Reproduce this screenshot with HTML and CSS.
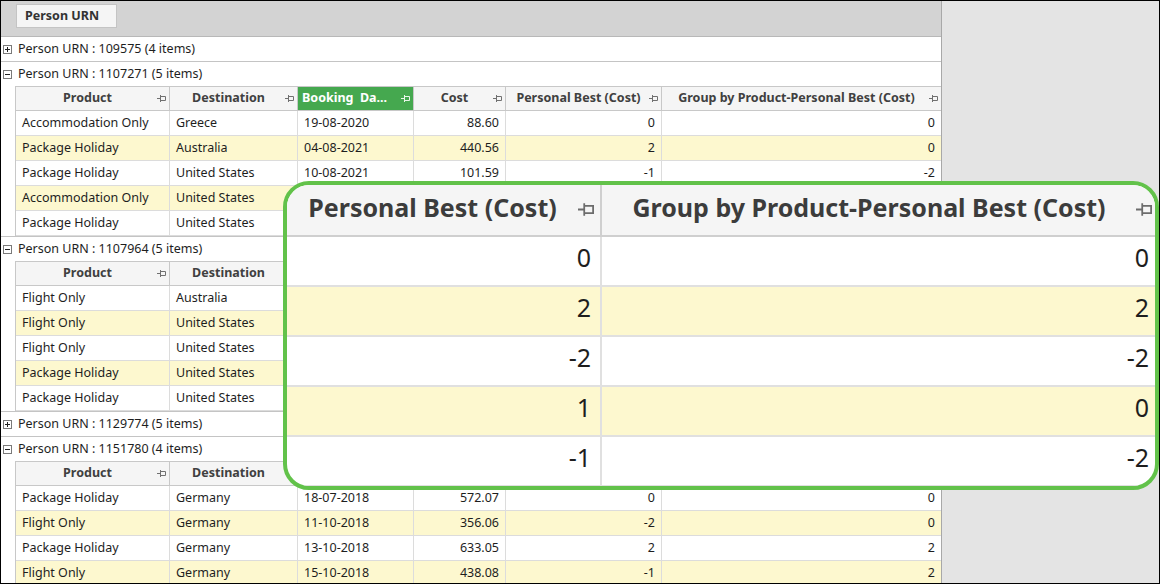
FILE: index.html
```html
<!DOCTYPE html>
<html lang="en">
<head>
  <meta charset="UTF-8">
  <meta name="viewport" content="width=device-width, initial-scale=1.0">
  <title>Personal Best (Cost)</title>
  <link rel="stylesheet" href="styles.css">
</head>
<body>
  <div class="frame">
    <div class="grid">
      <div class="group-panel">
        <span class="group-chip">Person URN</span>
      </div>

      <!-- grupo 109575 (cerrado) -->
      <div class="group">
        <div class="group-row"><span class="expander plus"></span>Person URN : 109575 (4 items)</div>
      </div>

      <!-- grupo 1107271 -->
      <div class="group">
        <div class="group-row"><span class="expander"></span>Person URN : 1107271 (5 items)</div>
        <div class="detail">
          <div class="row head">
            <div class="hd"><span>Product</span><svg class="pin" viewBox="0 0 9 7"><path d="M0 3.5H3M3.5 0V7M3.5 1.5H8.5V5.5H3.5"/></svg></div>
            <div class="hd"><span>Destination</span><svg class="pin" viewBox="0 0 9 7"><path d="M0 3.5H3M3.5 0V7M3.5 1.5H8.5V5.5H3.5"/></svg></div>
            <div class="hd sorted"><span>Booking&nbsp; Da...</span><svg class="pin" viewBox="0 0 9 7"><path d="M0 3.5H3M3.5 0V7M3.5 1.5H8.5V5.5H3.5"/></svg></div>
            <div class="hd"><span>Cost</span><svg class="pin" viewBox="0 0 9 7"><path d="M0 3.5H3M3.5 0V7M3.5 1.5H8.5V5.5H3.5"/></svg></div>
            <div class="hd"><span>Personal Best (Cost)</span><svg class="pin" viewBox="0 0 9 7"><path d="M0 3.5H3M3.5 0V7M3.5 1.5H8.5V5.5H3.5"/></svg></div>
            <div class="hd"><span>Group by Product-Personal Best (Cost)</span><svg class="pin" viewBox="0 0 9 7"><path d="M0 3.5H3M3.5 0V7M3.5 1.5H8.5V5.5H3.5"/></svg></div>
          </div>
          <div class="row"><div>Accommodation Only</div><div>Greece</div><div>19-08-2020</div><div class="num">88.60</div><div class="num">0</div><div class="num">0</div></div>
          <div class="row alt"><div>Package Holiday</div><div>Australia</div><div>04-08-2021</div><div class="num">440.56</div><div class="num">2</div><div class="num">0</div></div>
          <div class="row"><div>Package Holiday</div><div>United States</div><div>10-08-2021</div><div class="num">101.59</div><div class="num">-1</div><div class="num">-2</div></div>
          <div class="row alt"><div>Accommodation Only</div><div>United States</div><div>12-08-2021</div><div class="num">212.40</div><div class="num">1</div><div class="num">0</div></div>
          <div class="row"><div>Package Holiday</div><div>United States</div><div>14-08-2021</div><div class="num">95.10</div><div class="num">-1</div><div class="num">-2</div></div>
        </div>
      </div>

      <!-- grupo 1107964 -->
      <div class="group">
        <div class="group-row"><span class="expander"></span>Person URN : 1107964 (5 items)</div>
        <div class="detail">
          <div class="row head">
            <div class="hd"><span>Product</span><svg class="pin" viewBox="0 0 9 7"><path d="M0 3.5H3M3.5 0V7M3.5 1.5H8.5V5.5H3.5"/></svg></div>
            <div class="hd"><span>Destination</span><svg class="pin" viewBox="0 0 9 7"><path d="M0 3.5H3M3.5 0V7M3.5 1.5H8.5V5.5H3.5"/></svg></div>
            <div class="hd"><span>Booking Date</span><svg class="pin" viewBox="0 0 9 7"><path d="M0 3.5H3M3.5 0V7M3.5 1.5H8.5V5.5H3.5"/></svg></div>
            <div class="hd"><span>Cost</span><svg class="pin" viewBox="0 0 9 7"><path d="M0 3.5H3M3.5 0V7M3.5 1.5H8.5V5.5H3.5"/></svg></div>
            <div class="hd"><span>Personal Best (Cost)</span><svg class="pin" viewBox="0 0 9 7"><path d="M0 3.5H3M3.5 0V7M3.5 1.5H8.5V5.5H3.5"/></svg></div>
            <div class="hd"><span>Group by Product-Personal Best (Cost)</span><svg class="pin" viewBox="0 0 9 7"><path d="M0 3.5H3M3.5 0V7M3.5 1.5H8.5V5.5H3.5"/></svg></div>
          </div>
          <div class="row"><div>Flight Only</div><div>Australia</div><div>02-03-2019</div><div class="num">310.20</div><div class="num">0</div><div class="num">0</div></div>
          <div class="row alt"><div>Flight Only</div><div>United States</div><div>17-05-2019</div><div class="num">285.75</div><div class="num">2</div><div class="num">2</div></div>
          <div class="row"><div>Flight Only</div><div>United States</div><div>21-09-2019</div><div class="num">199.99</div><div class="num">-2</div><div class="num">-2</div></div>
          <div class="row alt"><div>Package Holiday</div><div>United States</div><div>08-01-2020</div><div class="num">702.30</div><div class="num">1</div><div class="num">0</div></div>
          <div class="row"><div>Package Holiday</div><div>United States</div><div>30-06-2020</div><div class="num">655.40</div><div class="num">-1</div><div class="num">-2</div></div>
        </div>
      </div>

      <!-- grupo 1129774 (cerrado) -->
      <div class="group">
        <div class="group-row"><span class="expander plus"></span>Person URN : 1129774 (5 items)</div>
      </div>

      <!-- grupo 1151780 -->
      <div class="group">
        <div class="group-row"><span class="expander"></span>Person URN : 1151780 (4 items)</div>
        <div class="detail">
          <div class="row head">
            <div class="hd"><span>Product</span><svg class="pin" viewBox="0 0 9 7"><path d="M0 3.5H3M3.5 0V7M3.5 1.5H8.5V5.5H3.5"/></svg></div>
            <div class="hd"><span>Destination</span><svg class="pin" viewBox="0 0 9 7"><path d="M0 3.5H3M3.5 0V7M3.5 1.5H8.5V5.5H3.5"/></svg></div>
            <div class="hd"><span>Booking Date</span><svg class="pin" viewBox="0 0 9 7"><path d="M0 3.5H3M3.5 0V7M3.5 1.5H8.5V5.5H3.5"/></svg></div>
            <div class="hd"><span>Cost</span><svg class="pin" viewBox="0 0 9 7"><path d="M0 3.5H3M3.5 0V7M3.5 1.5H8.5V5.5H3.5"/></svg></div>
            <div class="hd"><span>Personal Best (Cost)</span><svg class="pin" viewBox="0 0 9 7"><path d="M0 3.5H3M3.5 0V7M3.5 1.5H8.5V5.5H3.5"/></svg></div>
            <div class="hd"><span>Group by Product-Personal Best (Cost)</span><svg class="pin" viewBox="0 0 9 7"><path d="M0 3.5H3M3.5 0V7M3.5 1.5H8.5V5.5H3.5"/></svg></div>
          </div>
          <div class="row"><div>Package Holiday</div><div>Germany</div><div>18-07-2018</div><div class="num">572.07</div><div class="num">0</div><div class="num">0</div></div>
          <div class="row alt"><div>Flight Only</div><div>Germany</div><div>11-10-2018</div><div class="num">356.06</div><div class="num">-2</div><div class="num">0</div></div>
          <div class="row"><div>Package Holiday</div><div>Germany</div><div>13-10-2018</div><div class="num">633.05</div><div class="num">2</div><div class="num">2</div></div>
          <div class="row alt"><div>Flight Only</div><div>Germany</div><div>15-10-2018</div><div class="num">438.08</div><div class="num">-1</div><div class="num">2</div></div>
        </div>
      </div>
    </div>

    <div class="side"></div>

    <!-- Ampliación de las dos columnas calculadas -->
    <div class="callout">
      <div class="zrow zhead">
        <div class="zhd"><span>Personal Best (Cost)</span><svg class="zpin" viewBox="0 0 9 7"><path d="M0 3.5H3M3.5 0V7M3.5 1.5H8.5V5.5H3.5"/></svg></div>
        <div class="zhd"><span>Group by Product-Personal Best (Cost)</span><svg class="zpin" viewBox="0 0 9 7"><path d="M0 3.5H3M3.5 0V7M3.5 1.5H8.5V5.5H3.5"/></svg></div>
      </div>
      <div class="zrow"><div>0</div><div>0</div></div>
      <div class="zrow alt"><div>2</div><div>2</div></div>
      <div class="zrow"><div>-2</div><div>-2</div></div>
      <div class="zrow alt"><div>1</div><div>0</div></div>
      <div class="zrow"><div>-1</div><div>-2</div></div>
    </div>
  </div>
</body>
</html>
```

FILE: styles.css
```css
:root {
  --text: #1e1e1e;
  --head-text: #404040;
  --head-bg: #f5f5f5;
  --line: #dcdcdc;
  --head-line: #c8c8c8;
  --alt-bg: #fdf8cf;
  --green: #45a84f;
  --callout: #62c24a;
}

* {
  box-sizing: border-box;
}

body {
  margin: 0;
  font-family: "Noto Sans", "Open Sans", sans-serif;
  font-size: 12.5px;
  color: var(--text);
  background: #fff;
}

.frame {
  position: relative;
  width: 1160px;
  height: 584px;
  border: 1px solid #000;
  display: flex;
  overflow: hidden;
}

.grid {
  width: 941px;
  flex: none;
  border-right: 1px solid #a8a8a8;
  background: #fff;
  overflow: hidden;
}

.side {
  flex: 1;
  background: #e4e4e4;
}

.group-panel {
  height: 36px;
  background: #d3d3d3;
  border-bottom: 1px solid #b8b8b8;
  padding: 3px 0 0 15px;
}

.group-chip {
  display: inline-block;
  width: 101px;
  height: 24px;
  line-height: 21px;
  padding-left: 8px;
  background: #f5f5f5;
  border: 1px solid #c4c4c4;
  font-weight: bold;
  color: #333;
}

.group {
  border-bottom: 1px solid #c4c4c4;
}

.group-row {
  height: 24px;
  display: flex;
  align-items: center;
  padding: 0 0 2px 2px;
  white-space: nowrap;
}

.expander {
  position: relative;
  width: 9px;
  height: 9px;
  border: 1px solid #7a7a7a;
  margin: 2px 6px 0 0;
  background: #fff;
}

.expander::before,
.expander.plus::after {
  content: "";
  position: absolute;
  background: #222;
}

.expander::before {
  left: 1px;
  top: 3px;
  width: 5px;
  height: 1px;
}

.expander.plus::after {
  left: 3px;
  top: 1px;
  width: 1px;
  height: 5px;
}

.detail {
  margin-left: 14px;
  border-left: 1px solid var(--head-line);
}

.row {
  display: grid;
  grid-template-columns: 154px 128px 116px 92px 156px 1fr;
  height: 25px;
}

.row > div {
  border-right: 1px solid var(--line);
  border-bottom: 1px solid var(--line);
  padding: 0 6px;
  line-height: 23px;
  white-space: nowrap;
  overflow: hidden;
}

.row > div:last-child {
  border-right: none;
}

.row.alt {
  background: var(--alt-bg);
}

.num {
  text-align: right;
}

.row.head {
  height: 25px;
  border-top: 1px solid var(--head-line);
}

.row.head > div.hd {
  display: flex;
  align-items: center;
  background: var(--head-bg);
  border-right-color: var(--head-line);
  border-bottom-color: var(--head-line);
  font-weight: bold;
  color: var(--head-text);
  padding: 0 3px 2px 4px;
  line-height: 20px;
}

.hd span {
  flex: 1;
  text-align: center;
  overflow: hidden;
  white-space: nowrap;
}

.row.head > div.sorted {
  background: var(--green);
  color: #fff;
}

.sorted span {
  text-align: left;
}

.pin {
  width: 9px;
  height: 7px;
  flex: none;
  margin: 2px 0 0 2px;
  fill: none;
  stroke: #707070;
  stroke-width: 1;
}

.sorted .pin {
  stroke: #e8f5e9;
}

/* Recuadro ampliado */
.callout {
  position: absolute;
  left: 282px;
  top: 180px;
  width: 876px;
  height: 309px;
  border: 4px solid var(--callout);
  border-radius: 26px;
  background: #fff;
  overflow: hidden;
}

.zrow {
  display: grid;
  grid-template-columns: 315px 558px;
  height: 50px;
}

.zrow > div {
  border-right: 2px solid #e0e0e0;
  border-bottom: 2px solid #e0e0e0;
  font-size: 25px;
  line-height: 40px;
  text-align: right;
  padding-right: 9px;
  color: var(--text);
}

.zrow.alt {
  background: var(--alt-bg);
}

.zrow.zhead {
  height: 52px;
  background: var(--head-bg);
}

.zrow.zhead > div.zhd {
  display: flex;
  align-items: center;
  border-right-color: #cfcfcf;
  border-bottom-color: #cfcfcf;
  font-weight: bold;
  color: #3c3c3c;
  padding: 0 6px 6px 4px;
  line-height: 40px;
}

.zhd span {
  flex: 1;
  text-align: center;
  white-space: nowrap;
}

.zpin {
  width: 16px;
  height: 13px;
  flex: none;
  margin: 4px 0 0 4px;
  fill: none;
  stroke: #6c6c6c;
  stroke-width: 1;
}
```
